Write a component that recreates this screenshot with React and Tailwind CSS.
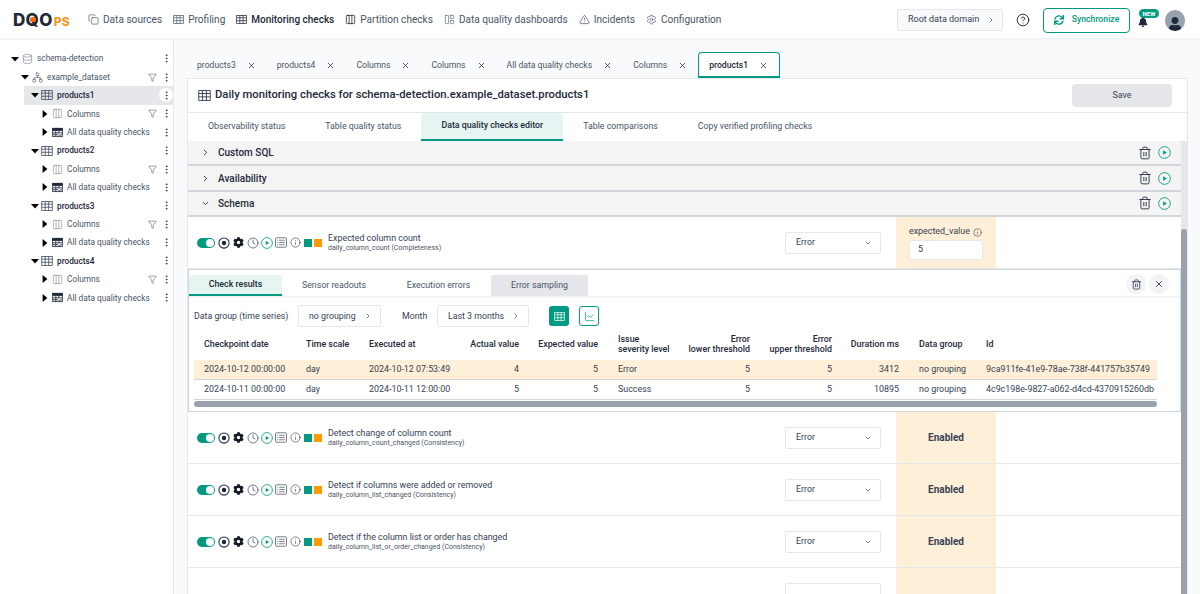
import { Fragment } from 'react';
import {
  ChevronDown, ChevronRight, Clock, Columns3, Copy, Database, EllipsisVertical,
  Filter, Info, LayoutPanelLeft, LineChart, Network, Settings, TriangleAlert, Trash2, X, CircleHelp,
} from 'lucide-react';
import { FaBell, FaCog, FaSync, FaUser } from 'react-icons/fa';

const TEAL = '#029a80';

function GridIcon({ className = 'w-[12px] h-[12px]' }) {
  return (
    <svg viewBox="0 0 16 16" fill="none" stroke="currentColor" strokeWidth="1" className={className}>
      <rect x="1" y="2" width="14" height="12" />
      <path d="M1 5.5h14M1 9.7h14M5.6 2v12M10.3 2v12" />
    </svg>
  );
}

function ChecksIcon() {
  return (
    <svg viewBox="0 0 16 16" className="w-[11px] h-[11px] text-gray-800" fill="none" stroke="currentColor" strokeWidth="1.2">
      <rect x="1" y="2" width="14" height="12" />
      <path d="M1 2h14v3H1z" fill="currentColor" />
      <path d="M1 8.5h14M1 11.2h8M5.5 5v9M10 5v4" />
      <path d="M9.5 12l1.5 1.2 3-3" strokeWidth="1.4" />
    </svg>
  );
}

function TargetIcon() {
  return (
    <svg viewBox="0 0 16 16" className="ml-[3px] w-[12px] h-[12px] text-gray-800" fill="none">
      <circle cx="8" cy="8" r="6.8" stroke="currentColor" strokeWidth="1.4" />
      <circle cx="8" cy="8" r="3" fill="currentColor" />
    </svg>
  );
}

function Caret({ open }) {
  return (
    <svg viewBox="0 0 10 10" className="w-[8px] h-[8px] shrink-0 text-black" fill="currentColor">
      {open ? <path d="M0 2.5h10L5 8z" /> : <path d="M2 0v10l6-5z" />}
    </svg>
  );
}

function TreeRow({ level, open, icon, label, filter, active, bold }) {
  const pad = ['pl-[11px]', 'pl-[21px]', 'pl-[31px]', 'pl-[41px]'][level];
  return (
    <div className={`h-[18.4px] flex items-center ${pad} ${active ? 'bg-gray-200 ml-[24px] !pl-[7px]' : ''}`}>
      <Caret open={open} />
      <div className="flex-1 min-w-0 h-full flex items-center gap-[3px] pl-[2px]">
        <span className="w-[12px] flex justify-center shrink-0">{icon}</span>
        <span className={`ml-[1px] flex-1 whitespace-nowrap text-[8.3px] ${bold ? 'font-medium text-gray-800' : 'text-gray-600'}`}>{label}</span>
        {filter && <Filter className="w-[9px] h-[9px] text-gray-600 -mr-[1px]" strokeWidth={1.5} />}
        <span className={`w-[14px] h-[14px] rounded-full flex items-center justify-center ${active ? 'bg-white' : ''}`}>
          <EllipsisVertical className="w-[11px] h-[11px] text-gray-700" strokeWidth={2} />
        </span>
      </div>
    </div>
  );
}

function Tree() {
  return (
    <div className="w-[174px] shrink-0 bg-white border-r border-gray-200 pt-[9.5px]">
      <TreeRow level={0} open icon={<Database className="w-[11px] h-[12px] text-gray-500" strokeWidth={1.2} />} label="schema-detection" />
      <TreeRow level={1} open icon={<Network className="w-[11px] h-[11px] text-gray-600" strokeWidth={1.3} />} label="example_dataset" filter />
      {['products1', 'products2', 'products3', 'products4'].map((name, i) => (
        <Fragment key={name}>
          <TreeRow level={2} open active={i === 0} bold icon={<GridIcon className="w-[12px] h-[12px] text-gray-700" />} label={name} />
          <TreeRow level={3} icon={<Columns3 className="w-[11px] h-[11px] text-gray-500" strokeWidth={1.1} />} label="Columns" filter />
          <TreeRow level={3} icon={<ChecksIcon />} label="All data quality checks" />
        </Fragment>
      ))}
    </div>
  );
}

const navItems = [
  { label: 'Data sources', icon: <Copy className="w-[11px] h-[11px]" strokeWidth={1.4} /> },
  { label: 'Profiling', icon: <GridIcon className="w-[11px] h-[11px]" /> },
  { label: 'Monitoring checks', icon: <GridIcon className="w-[11px] h-[11px] text-gray-900" />, active: true },
  { label: 'Partition checks', icon: <Columns3 className="w-[11px] h-[11px] text-gray-900" strokeWidth={1.6} /> },
  { label: 'Data quality dashboards', icon: <LayoutPanelLeft className="w-[11px] h-[11px]" strokeWidth={1.3} /> },
  { label: 'Incidents', icon: <TriangleAlert className="w-[11px] h-[11px]" strokeWidth={1.5} /> },
  { label: 'Configuration', icon: <Settings className="w-[11px] h-[11px]" strokeWidth={1.4} /> },
];

function Header() {
  return (
    <div className="h-[40px] shrink-0 bg-white border-b-2 border-gray-100 flex items-center pl-[13px] pr-[15px] pt-[2px]">
      <div className="w-[75px] flex items-baseline [font-family:Inter,sans-serif] font-extrabold text-[#1f2937] text-[17px] leading-none tracking-[0.3px]">
        <span>D</span>
        <span className="relative">
          Q
          <span className="absolute left-[4px] top-[5px] w-[6px] h-[5px] rounded-full bg-orange-500" />
        </span>
        <span>O</span>
        <span className="ml-[1px] text-[#f7981d] text-[12px]">PS</span>
      </div>
      <div className="flex items-center gap-[11px]">
        {navItems.map((n) => (
          <div key={n.label} className={`flex items-center gap-[4px] whitespace-nowrap ${n.active ? 'text-[10px] font-medium text-gray-800' : 'text-[10.1px] text-gray-600'}`}>
            {n.icon}
            <span>{n.label}</span>
          </div>
        ))}
      </div>
      <div className="ml-auto flex items-center">
        <div className="w-[106px] h-[22px] bg-gray-50 border border-gray-200 rounded-[2px] flex items-center justify-between pl-[10px] pr-[7px] whitespace-nowrap text-[9px] text-gray-700">
          <span>Root data domain</span>
          <ChevronRight className="w-[8px] h-[8px]" strokeWidth={2} />
        </div>
        <CircleHelp className="ml-[13px] w-[14px] h-[14px] text-gray-900" strokeWidth={1.5} />
        <div className="ml-[13px] w-[87px] h-[25px] border border-[#029a80] rounded-[4px] flex items-center justify-center gap-[8px] text-[8.7px] font-medium text-[#029a80]">
          <FaSync className="w-[10px] h-[10px]" />
          <span>Synchronize</span>
        </div>
        <div className="relative ml-[7px] w-[15px] h-[20px] flex items-end">
          <FaBell className="w-[10px] h-[10px] mb-[3px] ml-[1px] text-gray-800" />
          <span className="absolute -top-[1px] left-[2px] w-[20px] h-[9px] bg-[#029a80] rounded-full text-white text-[6px] font-bold flex items-center justify-center">NEW</span>
        </div>
        <div className="ml-[13px] w-[20px] h-[21px] rounded-full bg-gray-400 flex items-end justify-center overflow-hidden">
          <FaUser className="w-[14px] h-[14px] text-gray-800" />
        </div>
      </div>
    </div>
  );
}

const tabs = ['products3', 'products4', 'Columns', 'Columns', 'All data quality checks', 'Columns', 'products1'];

function TabBar() {
  return (
    <div className="h-[26px] mt-[12px] shrink-0 flex items-stretch ml-[13px]">
      {tabs.map((t, i) => {
        const active = i === tabs.length - 1;
        return (
          <div
            key={i}
            className={`flex items-center pl-[10px] pr-[11px] pt-[1px] whitespace-nowrap text-[8.6px] ${active ? 'bg-white border border-[#029a80] border-b-2 rounded-t-[4px] font-medium text-gray-800' : 'text-gray-600'}`}
          >
            <span>{t}</span>
            <X className="ml-[11px] w-[9px] h-[9px] text-gray-800" strokeWidth={2} />
          </div>
        );
      })}
    </div>
  );
}

const subTabs = ['Observability status', 'Table quality status', 'Data quality checks editor', 'Table comparisons', 'Copy verified profiling checks'];

function SectionHeader({ open, label }) {
  return (
    <div className="h-[25.4px] shrink-0 bg-[#f4f4f4] border-b-2 border-gray-300 flex items-center pl-[13px] pr-[10px]">
      {open ? <ChevronDown className="w-[9px] h-[9px] text-gray-800" strokeWidth={2.4} /> : <ChevronRight className="w-[9px] h-[9px] text-gray-800" strokeWidth={2.4} />}
      <span className="ml-[8px] text-[10px] font-medium text-gray-800">{label}</span>
      <Trash2 className="ml-auto w-[14px] h-[14px] text-gray-800" strokeWidth={1.5} />
      <PlayCircle className="ml-[6px] w-[13px] h-[13px]" />
    </div>
  );
}

function PlayCircle({ className }) {
  return (
    <svg viewBox="0 0 16 16" className={className} fill="none">
      <circle cx="8" cy="8" r="7.2" stroke={TEAL} strokeWidth="1.1" />
      <path d="M6.3 5.2v5.6L11 8z" fill={TEAL} />
    </svg>
  );
}

function ListIcon() {
  return (
    <svg viewBox="0 0 16 14" className="w-[12px] h-[11px] text-gray-600" fill="none" stroke="currentColor" strokeWidth="1">
      <rect x="0.7" y="0.7" width="14.6" height="12.6" rx="1.5" />
      <path d="M3 4h1M3 7h1M3 10h1M5.5 4H13M5.5 7H13M5.5 10H13" />
    </svg>
  );
}

function CheckControls() {
  return (
    <div className="flex items-center w-[131px] shrink-0">
      <div className="w-[18px] h-[10px] rounded-full bg-[#029a80] flex items-center justify-end pr-[1px]">
        <span className="w-[8px] h-[8px] rounded-full bg-white" />
      </div>
      <TargetIcon />
      <FaCog className="ml-[3px] w-[11px] h-[11px] text-gray-900" />
      <Clock className="ml-[3px] w-[12px] h-[12px] text-gray-700" strokeWidth={1.4} />
      <PlayCircle className="ml-[2px] w-[12px] h-[12px]" />
      <span className="ml-[2px]"><ListIcon /></span>
      <Info className="ml-[3px] w-[11px] h-[11px] text-gray-700" strokeWidth={1.4} />
      <span className="ml-[3px] w-[8px] h-[8px] bg-[#029a80]" />
      <span className="ml-[2px] w-[8px] h-[8px] bg-[#ff9900]" />
    </div>
  );
}

function CheckRow({ title, sub, enabled, blank }) {
  return (
    <div className="flex items-stretch shrink-0 border-b border-gray-200 h-[52px] pl-[9px]">
      <div className="w-[588px] shrink-0 flex items-center">
        {!blank && <CheckControls />}
        <div className="whitespace-nowrap">
          <div className="text-[8.9px] leading-[11px] text-gray-700">{title}</div>
          <div className="text-[7px] leading-[9px] text-gray-600">{sub}</div>
        </div>
      </div>
      <div className="w-[96px] shrink-0 flex items-center">
        <div className="w-full h-[22px] bg-white border border-gray-200 rounded-[2px] flex items-center justify-between pl-[10px] pr-[8px] text-[8.8px] text-gray-700">
          {!blank && <span>Error</span>}
          {!blank && <ChevronDown className="w-[8px] h-[8px]" strokeWidth={2} />}
        </div>
      </div>
      <div className="ml-[15px] w-[100px] shrink-0 bg-[#feefd8] flex items-center justify-center">
        {enabled ? (
          <span className="text-[10px] font-bold text-gray-700">{blank ? '' : 'Enabled'}</span>
        ) : (
          <div className="w-[74px]">
            <div className="flex items-center gap-[3px] whitespace-nowrap text-[8.9px] text-gray-700">
              expected_value <Info className="w-[9px] h-[9px] shrink-0" strokeWidth={1.5} />
            </div>
            <div className="mt-[1px] h-[20px] bg-white border border-gray-200 rounded-[2px] flex items-center pl-[8px] text-[9px] text-gray-700">5</div>
          </div>
        )}
      </div>
    </div>
  );
}

const colWidths = ['w-[102px]', 'w-[63px]', 'w-[100px]', 'w-[70px]', 'w-[79px]', 'w-[72px]', 'w-[80px]', 'w-[82px]', 'w-[67px]', 'w-[67px]', 'w-[181px]'];

const columns = [
  { label: 'Checkpoint date' },
  { label: 'Time scale' },
  { label: 'Executed at' },
  { label: 'Actual value', right: true },
  { label: 'Expected value', right: true },
  { label: ['Issue', 'severity level'] },
  { label: ['Error', 'lower threshold'], right: true },
  { label: ['Error', 'upper threshold'], right: true },
  { label: 'Duration ms', right: true },
  { label: 'Data group' },
  { label: 'Id' },
];

const rows = [
  ['2024-10-12 00:00:00', 'day', '2024-10-12 07:53:49', '4', '5', 'Error', '5', '5', '3412', 'no grouping', '9ca911fe-41e9-78ae-738f-441757b35749'],
  ['2024-10-11 00:00:00', 'day', '2024-10-11 12:00:00', '5', '5', 'Success', '5', '5', '10895', 'no grouping', '4c9c198e-9827-a062-d4cd-4370915260db'],
];

function ResultsPanel() {
  const panelTabs = [
    { t: 'Check results', w: 'w-[93px]' },
    { t: 'Sensor readouts', w: 'w-[104px]' },
    { t: 'Execution errors', w: 'w-[105px]' },
    { t: 'Error sampling', w: 'w-[97px]' },
  ];
  return (
    <div className="shrink-0 h-[143px] border border-gray-300 bg-white flex flex-col">
      <div className="h-[28px] shrink-0 border-b-2 border-gray-100 flex items-end pr-[11px]">
        {panelTabs.map(({ t, w }, i) => (
          <div
            key={t}
            className={`${w} h-[21px] flex items-center justify-center whitespace-nowrap text-[8.8px] rounded-t-[3px] ${i === 0 ? 'bg-[#e6f5f2] border-b-2 border-[#029a80] font-medium text-gray-800' : i === 3 ? 'bg-gray-200 text-gray-600' : 'text-gray-600'}`}
          >
            {t}
          </div>
        ))}
        <div className="ml-auto self-center flex items-center gap-[3px] mt-[2px]">
          <span className="w-[20px] h-[20px] rounded-full bg-gray-100 flex items-center justify-center"><Trash2 className="w-[11px] h-[11px] text-gray-800" strokeWidth={1.6} /></span>
          <span className="w-[20px] h-[20px] rounded-full bg-gray-100 flex items-center justify-center"><X className="w-[10px] h-[10px] text-gray-800" strokeWidth={2} /></span>
        </div>
      </div>
      <div className="h-[36px] shrink-0 flex items-center pl-[5px] whitespace-nowrap text-[8.8px] text-gray-700">
        <span className="w-[104px]">Data group (time series)</span>
        <div className="w-[83px] h-[22px] border border-gray-200 rounded-[2px] flex items-center justify-between pl-[10px] pr-[8px]">
          <span>no grouping</span>
          <ChevronRight className="w-[8px] h-[8px]" strokeWidth={2} />
        </div>
        <span className="ml-[21px] w-[35px]">Month</span>
        <div className="w-[92px] h-[22px] border border-gray-200 rounded-[2px] flex items-center justify-between pl-[10px] pr-[8px]">
          <span>Last 3 months</span>
          <ChevronRight className="w-[8px] h-[8px]" strokeWidth={2} />
        </div>
        <span className="ml-[20px] w-[20px] h-[20px] rounded-[3px] bg-[#029a80] flex items-center justify-center"><GridIcon className="w-[11px] h-[11px] text-white" /></span>
        <span className="ml-[10px] w-[20px] h-[20px] rounded-[3px] border border-[#029a80] flex items-center justify-center"><LineChart className="w-[11px] h-[11px] text-[#029a80]" strokeWidth={1.6} /></span>
      </div>
      <div className="ml-[5px] w-[963px]">
        <table className="table-fixed w-[963px] text-[8.9px] text-gray-700 border-collapse">
          <colgroup>
            {colWidths.map((w, i) => <col key={i} className={w} />)}
          </colgroup>
          <thead>
            <tr className="h-[25.5px]">
              {columns.map((c, i) => (
                <th key={i} className={`pr-[10px] pb-[6px] font-medium text-gray-800 leading-[10px] whitespace-nowrap ${c.right ? 'text-right pl-0' : 'text-left pl-[10px]'}`}>
                  {Array.isArray(c.label) ? <>{c.label[0]}<br />{c.label[1]}</> : c.label}
                </th>
              ))}
            </tr>
          </thead>
          <tbody>
            {rows.map((r, i) => (
              <tr key={i} className={`h-[19.5px] border-b border-gray-300 ${i === 0 ? 'bg-[#feefd8]' : ''}`}>
                {r.map((v, j) => (
                  <td key={j} className={`px-[10px] whitespace-nowrap ${columns[j].right ? 'text-right' : ''}`}>{v}</td>
                ))}
              </tr>
            ))}
          </tbody>
        </table>
        <div className="mt-[1px] h-[6px] rounded-full bg-gray-400" />
      </div>
    </div>
  );
}

export default function App() {
  return (
    <div className="w-[1200px] h-[594px] overflow-hidden flex flex-col [font-family:Roboto,sans-serif] bg-[#f9fafb]">
      <Header />
      <div className="flex-1 min-h-0 flex">
        <Tree />
        <div className="flex-1 min-w-0 flex flex-col">
          <TabBar />
          <div className="flex-1 min-h-0 ml-[13px] mr-[12px] bg-white border-t border-x border-gray-200 flex flex-col">
            <div className="h-[34px] shrink-0 border-b border-gray-200 flex items-center pl-[10px] pr-[15px]">
              <GridIcon className="w-[13px] h-[13px] text-gray-800" />
              <span className="ml-[4px] text-[11.25px] font-medium text-gray-800">Daily monitoring checks for schema-detection.example_dataset.products1</span>
              <div className="ml-auto w-[100px] h-[23px] rounded-[4px] bg-gray-200 flex items-center justify-center text-[8.8px] text-gray-700">Save</div>
            </div>
            <div className="h-[28px] shrink-0 flex items-stretch text-[8.8px] text-gray-600">
              {subTabs.map((t, i) => (
                <div key={t} className={`px-[20px] flex items-center rounded-t-[4px] ${i === 2 ? 'bg-[#e6f5f2] border-b-2 border-[#029a80] font-medium text-gray-800' : ''}`}>{t}</div>
              ))}
            </div>
            <div className="flex-1 min-h-0 flex">
              <div className="flex-1 min-w-0 flex flex-col overflow-hidden">
                <SectionHeader label="Custom SQL" />
                <SectionHeader label="Availability" />
                <SectionHeader open label="Schema" />
                <CheckRow title="Expected column count" sub="daily_column_count (Completeness)" />
                <ResultsPanel />
                <CheckRow enabled title="Detect change of column count" sub="daily_column_count_changed (Consistency)" />
                <CheckRow enabled title="Detect if columns were added or removed" sub="daily_column_list_changed (Consistency)" />
                <CheckRow enabled title="Detect if the column list or order has changed" sub="daily_column_list_or_order_changed (Consistency)" />
                <CheckRow enabled blank title="" sub="" />
              </div>
              <div className="w-[6px] shrink-0 bg-gray-200 flex flex-col">
                <div className="h-[88px] shrink-0" />
                <div className="flex-1 rounded-t-full bg-gray-400" />
              </div>
            </div>
          </div>
        </div>
      </div>
    </div>
  );
}
